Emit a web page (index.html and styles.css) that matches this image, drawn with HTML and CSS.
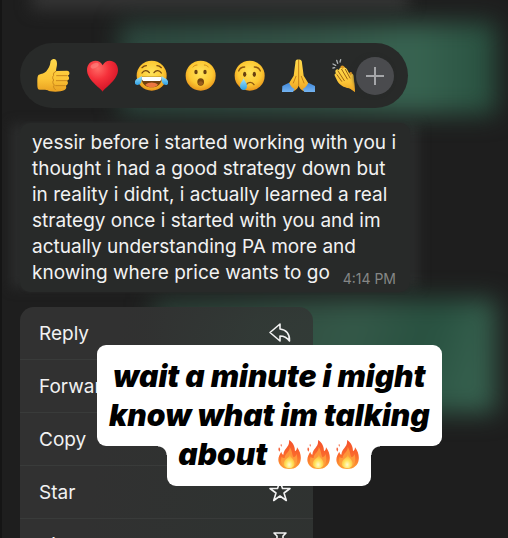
FILE: index.html
```html
<!DOCTYPE html>
<html lang="en">
<head>
<meta charset="utf-8">
<meta name="viewport" content="width=device-width, initial-scale=1">
<title>Message</title>
<link rel="stylesheet" href="styles.css">
</head>
<body>
<svg class="defs" width="0" height="0" aria-hidden="true">
  <defs>
    <radialGradient id="face" cx=".5" cy=".4" r=".6">
      <stop offset="0" stop-color="#ffe45c"/><stop offset=".65" stop-color="#fdc832"/><stop offset="1" stop-color="#e8951c"/>
    </radialGradient>
    <linearGradient id="skin" x1="0" y1="0" x2="0" y2="1">
      <stop offset="0" stop-color="#ffd84a"/><stop offset=".6" stop-color="#fcc536"/><stop offset="1" stop-color="#e9a021"/>
    </linearGradient>
    <radialGradient id="heart" cx=".35" cy=".25" r=".8">
      <stop offset="0" stop-color="#ff6a65"/><stop offset=".45" stop-color="#f5303a"/><stop offset="1" stop-color="#cf1024"/>
    </radialGradient>
    <linearGradient id="tear" x1="0" y1="0" x2="0" y2="1">
      <stop offset="0" stop-color="#a5e6fb"/><stop offset="1" stop-color="#2d9fe3"/>
    </linearGradient>
    <linearGradient id="sleeve" x1="0" y1="0" x2="0" y2="1">
      <stop offset="0" stop-color="#3f86d8"/><stop offset="1" stop-color="#74b4f1"/>
    </linearGradient>
    <linearGradient id="flame" x1="0" y1="0" x2="0" y2="1">
      <stop offset="0" stop-color="#f4512c"/><stop offset=".55" stop-color="#fb6a2c"/><stop offset="1" stop-color="#fda334"/>
    </linearGradient>
    <radialGradient id="core" cx=".5" cy=".75" r=".6">
      <stop offset="0" stop-color="#fffbd0"/><stop offset=".5" stop-color="#ffe45e"/><stop offset="1" stop-color="#fdb13a"/>
    </radialGradient>
    <symbol id="fire" viewBox="0 0 69 87">
      <path fill="url(#flame)" d="M33 0c13 8 18 21 18 34 4-2 6-7 6-12 9 11 13 25 11 38C66 77 52 87 34 87 15 87 2 77 1 60c0-10 4-17 9-25 1 5 3 8 6 9C18 24 36 22 33 0z"/>
      <path fill="#f4633c" d="M3 22c5 4 4 9 1 13-3-4-4-8-1-13zM9 12c3 2 3 5 1 8-2-2-3-5-1-8z"/>
      <path fill="#ffae42" opacity=".65" d="M35 20c9 14 6 24 12 32 5-2 7-6 9-10 6 24-2 42-22 42S5 68 11 50c3 4 6 5 9 4 0-15 16-17 15-34z"/>
      <path fill="url(#core)" d="M36 42c0 9 8 12 12 21 6 12-3 22-14 22s-21-9-15-21c3-8 16-11 17-22z"/>
    </symbol>
  </defs>
</svg>
<main class="screen">
  <div class="glow glow-grey"></div>
  <div class="glow glow-side"></div>
  <div class="glow glow-top"></div>
  <div class="glow glow-bottom"></div>

  <div class="stack">
    <div class="reactions">
      <button class="reaction" aria-label="Thumbs up">
        <svg viewBox="0 0 99 99"><path fill="url(#skin)" d="M47 1c8-3 13 4 13 13 0 8-3 15-3 22l33-1c9 0 10 13 2 15 7 4 5 13-2 15 5 4 3 13-4 15 4 5 1 12-5 14-6 4-28 6-41 3-6-2-10-5-16-5H8c-7 0-7-8-7-20 0-13 0-23 5-25 7-3 17-3 22-10 6-9 11-16 12-26 0-5 3-8 7-10z"/><path fill="none" stroke="#c9861b" stroke-width="3" stroke-linecap="round" d="M59 50h31M58 65h31M56 80h28M57 37c-6 2-9 7-7 12-4 4-4 10 0 14-4 5-3 11 2 15-4 4-2 10 3 14"/></svg>
      </button>
      <button class="reaction" aria-label="Heart">
        <svg viewBox="0 0 99 99"><path fill="url(#heart)" d="M50 98C43 86 3 63 3 33 3 16 14 5 28 5c11 0 18 5 22 14C54 10 61 5 71 5c14 0 25 11 25 28 0 30-40 53-46 65z"/><ellipse cx="26" cy="20" rx="13" ry="7" fill="#ff928b" opacity=".5" transform="rotate(-25 26 20)"/></svg>
      </button>
      <button class="reaction" aria-label="Tears of joy">
        <svg viewBox="0 0 99 99"><circle cx="50" cy="50" r="45" fill="url(#face)"/><path fill="none" stroke="#78470e" stroke-width="4" stroke-linecap="round" d="M21 42c6-9 16-9 22-1M57 41c6-8 16-8 22 1M21 26c4-4 8-6 13-6M66 20c5 0 9 2 13 6"/><path fill="#70400f" d="M18 53h64c-1 21-14 32-32 32S19 74 18 53z"/><path fill="#fff" d="M20 54h60c0 7-2 11-5 12H25c-3-1-5-5-5-12z"/><path fill="#ec7640" d="M31 77c10-9 28-9 38 0-10 11-28 11-38 0z"/><path fill="url(#tear)" d="M20 51c3 15-3 27-13 27-9 0-10-11-3-17 5-4 11-5 16-10zM80 51c-3 15 3 27 13 27 8 0 9-11 2-17-5-4-10-5-15-10z"/></svg>
      </button>
      <button class="reaction" aria-label="Surprised">
        <svg viewBox="0 0 99 99"><circle cx="50" cy="50" r="45" fill="url(#face)"/><ellipse cx="36" cy="39" rx="5" ry="7" fill="#684010"/><ellipse cx="63" cy="39" rx="5" ry="7" fill="#684010"/><ellipse cx="50" cy="69" rx="10" ry="11" fill="#75450f"/><ellipse cx="50" cy="73" rx="7" ry="6" fill="#985d1d"/><path fill="none" stroke="#cf8e1b" stroke-width="3" stroke-linecap="round" d="M27 24c3-4 7-6 12-6M61 18c5 0 9 2 12 6"/></svg>
      </button>
      <button class="reaction" aria-label="Crying">
        <svg viewBox="0 0 99 99"><circle cx="50" cy="50" r="45" fill="url(#face)"/><ellipse cx="35" cy="46" rx="5" ry="8" fill="#684010"/><ellipse cx="64" cy="46" rx="5" ry="8" fill="#684010"/><path fill="none" stroke="#8d570f" stroke-width="4" stroke-linecap="round" d="M17 36c3-8 10-12 18-12M64 24c8 0 15 4 18 12M40 77c5-9 18-9 23 0"/><path fill="url(#tear)" d="M32 58c3 8 10 14 10 23 0 8-4 12-10 12s-11-4-11-12c0-9 8-15 11-23z"/></svg>
      </button>
      <button class="reaction" aria-label="Folded hands">
        <svg viewBox="0 0 99 99"><path fill="url(#skin)" d="M49 2c-7-1-9 3-9 10l-5 38-15 24 15 23c8-5 14-10 15-18 1 8 7 13 15 18l15-23-15-24-5-38c0-7-3-11-11-10z"/><path fill="none" stroke="#c47f19" stroke-width="3" stroke-linecap="round" d="M50 4v75M42 52l-8 20M58 52l8 20"/><path fill="url(#sleeve)" d="M1 81l20-10c4 9 9 15 17 19l-5 9H0zM99 81L79 71c-4 9-9 15-17 19l5 9h33z"/></svg>
      </button>
      <button class="reaction" aria-label="Clapping hands">
        <svg viewBox="0 0 99 99"><path fill="#dc9622" d="M29 22c4-5 10-2 13 4l12 20c1-8 8-9 10-2l6 29 2 26c-6-3-11-9-18-12-14-4-26-11-32-24z"/><path fill="url(#skin)" d="M14 34c3-5 7-4 10 0 0-8 7-10 11-4 3-7 9-6 13 1l11 20c1-7 7-8 9-1l2 23c0 9 1 17 2 26-6-3-10-9-17-11-18-3-29-10-36-22l-7-14c-3-6 0-10 4-8-3-4-4-7-2-10z"/><path fill="none" stroke="#9b6214" stroke-width="3" stroke-linecap="round" d="M18 47l14 20M21 36l19 29M32 31l17 29M43 31l14 26"/><path fill="none" stroke="#aeb2b3" stroke-width="4" stroke-linecap="round" d="M6 15l8 4M17 4l3 9M29 2l-2 7M6 27l5-1"/></svg>
      </button>
      <button class="more" aria-label="More reactions"><svg viewBox="0 0 38 38"><path d="M19 10v18M10 19h18"/></svg></button>
    </div>

    <article class="bubble">
      <p class="message">yessir before i started working with you i<br>thought i had a good strategy down but<br>in reality i didnt, i actually learned a real<br>strategy once i started with you and im<br>actually understanding PA more and<br>knowing where price wants to go</p>
      <time class="time">4:14 PM</time>
    </article>

    <div class="menu">
      <button class="item"><span>Reply</span><svg class="icon" viewBox="0 0 22 22"><path d="M11 2L1 10.500l10 8.500v-5c5 0 7 1.500 9.500 5C21 12 17 7.500 11 7z"/></svg></button>
      <button class="item"><span>Forward</span><svg class="icon" viewBox="0 0 22 22"><path d="M11 2l10 8.500L11 19v-5c-5 0-7 1.500-9.500 5C1 12 5 7.500 11 7z"/></svg></button>
      <button class="item"><span>Copy</span><svg class="icon" viewBox="0 0 22 22"><path d="M8 2h11v14H8zM8 6H3v14h11v-4"/></svg></button>
      <button class="item"><span>Star</span><svg class="icon" viewBox="0 0 22 22"><path d="M11 0l2.500 7.500h7.500l-6 4.500 2.300 7.500-6.300-4.500-6.300 4.500L7 12 1 7.500h7.500z"/></svg></button>
      <button class="item"><span>Pin</span><svg class="icon" viewBox="0 0 22 22"><path d="M5 -1h12l-3 3v7l4 4H4l4-4V2zM11 13v8"/></svg></button>
    </div>
  </div>

  <div class="sticker">
    <div class="panel panel-main">wait a minute i might<br>know what im talking</div>
    <div class="panel panel-tail"><span>about</span>
      <span class="fires" role="img" aria-label="fire fire fire"><svg><use href="#fire"/></svg><svg><use href="#fire"/></svg><svg><use href="#fire"/></svg></span>
    </div>
  </div>
</main>
</body>
</html>
```
FILE: styles.css
```css
* { box-sizing: border-box; }

body {
  margin: 0;
  background: #1e1e1e;
  color: #f2f2f2;
  font-family: Inter, "Liberation Sans", sans-serif;
}

button {
  margin: 0;
  padding: 0;
  border: 0;
  background: none;
  color: inherit;
  font: inherit;
}

.defs { position: absolute; }

.screen {
  position: relative;
  height: 100vh;
  overflow: hidden;
  border-left: 2px solid #151515;
}

.glow { position: absolute; }

.glow-grey {
  top: -16px;
  left: 30px;
  right: 100px;
  height: 26px;
  background: #343434;
  filter: blur(8px);
}

.glow-side {
  top: 124px;
  left: 9px;
  right: 90px;
  height: 164px;
  background: #2b2c2c;
  filter: blur(6px);
}

.glow-top {
  top: 23px;
  left: 118px;
  right: 12px;
  height: 91px;
  background: linear-gradient(90deg, #2c483e, #345548 50%, #386451 78%, #28503f);
  filter: blur(12px);
}

.glow-bottom {
  top: 299px;
  left: 150px;
  right: 12px;
  height: 114px;
  background: linear-gradient(110deg, #2a3d35, #345848 55%, #285140 75%, #355f4d 90%);
  filter: blur(12px);
}

.stack {
  position: relative;
  display: flex;
  flex-direction: column;
  align-items: flex-start;
  gap: 15px;
  padding: 43px 18px 0;
}

.reactions {
  display: flex;
  align-items: center;
  gap: 16px;
  height: 65px;
  padding: 0 14px 0 17px;
  border-radius: 33px;
  background: #282a29;
}

.reaction {
  width: 33px;
  height: 33px;
}

.reaction svg,
.more svg {
  display: block;
  width: 100%;
  height: 100%;
}

.more {
  width: 38px;
  height: 38px;
  margin-left: -24px;
  border-radius: 50%;
  background: #4a4b4e;
  box-shadow: -2px 0 4px #282a29;
}

.more path {
  fill: none;
  stroke: #a5a6a9;
  stroke-width: 2;
}

.bubble {
  display: grid;
  padding: 7px 14px 6px 12px;
  border-radius: 10px;
  background: #282a29;
  box-shadow: 0 0 3px #282a29;
}

.message,
.time {
  grid-area: 1 / 1;
}

.message {
  margin: 0;
  font-size: 19px;
  line-height: 26px;
  white-space: nowrap;
}

.time {
  align-self: end;
  justify-self: end;
  color: #858786;
  font-size: 14px;
  line-height: 14px;
}

.menu {
  width: 293px;
  border-radius: 14px 14px 0 0;
  background: linear-gradient(100deg, rgba(49, 49, 49, 1) 30%, rgba(50, 54, 52, .85) 70%);
  overflow: hidden;
}

.item {
  display: flex;
  align-items: center;
  justify-content: space-between;
  width: 100%;
  height: 53px;
  padding: 0 22px 0 19px;
  border-bottom: 1px solid #393b3a;
  font-size: 19px;
  text-align: left;
}

.icon {
  width: 22px;
  height: 22px;
  overflow: visible;
  fill: none;
  stroke: #f2f2f2;
  stroke-width: 1.6;
  stroke-linejoin: round;
}

.sticker {
  position: absolute;
  top: 345px;
  left: 95px;
  display: flex;
  flex-direction: column;
  align-items: center;
  color: #000;
  font-size: 30px;
  font-style: italic;
  font-weight: 900;
  line-height: 39px;
  text-align: center;
  white-space: nowrap;
}

.panel { background: #fff; }

.panel-main {
  padding: 12px 12px 11px;
  border-radius: 9px;
}

.panel-tail {
  position: relative;
  display: flex;
  align-items: center;
  gap: 11px;
  height: 52px;
  margin-top: -12px;
  padding: 0 12px 12px 11px;
  border-radius: 0 0 9px 9px;
}

.panel-tail::before,
.panel-tail::after {
  content: "";
  position: absolute;
  top: 12px;
  width: 9px;
  height: 9px;
}

.panel-tail::before {
  right: 100%;
  background: radial-gradient(circle at 0 100%, transparent 8px, #fff 9px);
}

.panel-tail::after {
  left: 100%;
  background: radial-gradient(circle at 100% 100%, transparent 8px, #fff 9px);
}

.fires {
  display: flex;
  gap: 6px;
}

.fires svg {
  width: 23px;
  height: 29px;
}
```
